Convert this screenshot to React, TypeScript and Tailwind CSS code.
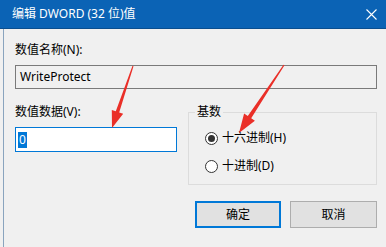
import React from "react";

const font = { fontFamily: '"Segoe UI", "Noto Sans", "Noto Sans CJK SC", sans-serif' };

function Radio({ label, checked }: { label: string; checked?: boolean }) {
  return (
    <div className="flex h-[16px] items-center">
      <span className="flex h-[13px] w-[13px] items-center justify-center rounded-full border border-[#333333] bg-white">
        {checked && <span className="h-[7px] w-[7px] rounded-full bg-[#333333]" />}
      </span>
      <span className="ml-[4px] text-[12px] leading-[16px] text-black">{label}</span>
    </div>
  );
}

function Arrows() {
  return (
    <svg className="pointer-events-none absolute inset-0" width="386" height="247" viewBox="0 0 386 247">
      <polygon
        fill="#ea2f28"
        points="133.5,66.2 119.2,112.5 123.2,113.8 112,128 111.8,109.9 115.8,111.3 132.5,65.8"
      />
      <polygon
        fill="#ea2f28"
        points="284.5,65.3 251.2,118.3 254.9,120.8 239,133 244.1,113.6 247.8,116.1 283.5,64.7"
      />
    </svg>
  );
}

export default function App() {
  return (
    <div className="relative h-[247px] w-[386px] overflow-hidden bg-[#f0f0f0]" style={font}>
      <div className="flex h-[29px] items-center justify-between border-b border-[#0a4e8f] bg-[#0b63b5] pl-[12px] pr-[8px] text-white">
        <span className="text-[12px] leading-[16px]">编辑 DWORD (32 位)值</span>
        <svg width="11" height="11" viewBox="0 0 11 11" className="mr-[1px]">
          <path d="M0.5 0.5 L10.5 10.5 M10.5 0.5 L0.5 10.5" stroke="white" strokeWidth="1.1" />
        </svg>
      </div>

      <div className="ml-[3px] h-[218px] border-l border-[#8aa4be] pl-[11px] pr-[9px] pt-[13px]">
        <div className="text-[12px] leading-[16px] text-black">数值名称(N):</div>
        <div className="mt-[7px] flex h-[24px] items-center border border-[#7a7a7a] bg-[#f0f0f0] pl-[4px] text-[12px] text-black">
          WriteProtect
        </div>

        <div className="mt-[15px] flex">
          <div className="w-[162px]">
            <div className="text-[12px] leading-[16px] text-black">数值数据(V):</div>
            <div className="mt-[7px] flex h-[25px] items-center border border-[#0078d7] bg-white pl-[2px]">
              <span className="bg-[#0078d7] px-[1px] text-[12px] leading-[16px] text-white">0</span>
            </div>
          </div>

          <fieldset className="ml-[11px] flex-1 border border-[#dcdcdc]">
            <legend className="ml-[6px] px-[2px] text-[12px] leading-[16px] text-black">基数</legend>
            <div className="flex flex-col gap-[12px] pb-[10px] pl-[16px] pt-[10px]">
              <Radio label="十六进制(H)" checked />
              <Radio label="十进制(D)" />
            </div>
          </fieldset>
        </div>

        <div className="mt-[16px] flex justify-end gap-[9px]">
          <button className="h-[27px] w-[86px] border-2 border-[#0078d7] bg-[#e1e1e1] text-[12px] text-black">
            确定
          </button>
          <button className="h-[27px] w-[87px] border border-[#adadad] bg-[#e1e1e1] text-[12px] text-black">
            取消
          </button>
        </div>
      </div>

      <Arrows />
    </div>
  );
}
